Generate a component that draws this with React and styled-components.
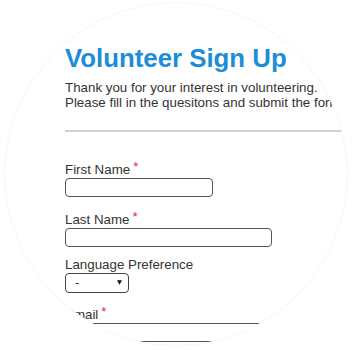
import React from 'react';
import styled, { createGlobalStyle } from 'styled-components';

const GlobalStyle = createGlobalStyle`
  html, body {
    margin: 0;
    padding: 0;
    background: #fff;
  }
  body {
    font-family: "Liberation Sans", Arial, sans-serif;
    color: #333;
  }
`;

const Page = styled.div`
  width: 352px;
  height: 350px;
  padding: 3px 0 0 5px;
  box-sizing: border-box;
`;

const Lens = styled.div`
  width: 342px;
  height: 342px;
  border-radius: 50%;
  overflow: hidden;
  background: #fff;
  box-shadow: 0 0 0 1px rgba(0, 0, 0, 0.025), 0 0 2px rgba(0, 0, 0, 0.04);
`;

const Form = styled.form`
  width: 340px;
  padding: 41px 0 0 60px;
  display: flex;
  flex-direction: column;
`;

const Title = styled.h1`
  margin: 0;
  font-size: 25.8px;
  font-weight: bold;
  line-height: normal;
  color: #1c8dd6;
`;

const Intro = styled.p`
  margin: 6.5px 0 0;
  font-size: 13.33px;
  line-height: normal;
  white-space: nowrap;
  color: #333;
`;

const Divider = styled.hr`
  margin: 20px 0 26px;
  width: 320px;
  height: 0;
  border: none;
  border-top: 2px solid #d2d2d2;
`;

const Field = styled.div`
  display: flex;
  flex-direction: column;
  align-items: flex-start;
  margin-bottom: 10px;
`;

const Label = styled.label`
  font-size: 13.33px;
  line-height: normal;
  color: #333;
  padding-top: ${(p) => (p.$required ? '4.5px' : '0')};
`;

const Req = styled.span`
  color: #e21b4f;
  margin-left: 3px;
  position: relative;
  top: -3px;
`;

const Input = styled.input`
  box-sizing: border-box;
  width: ${(p) => p.$width}px;
  height: 19px;
  margin: 1px 0 0;
  padding: 0 6px;
  border: 1px solid #555;
  border-radius: 4px;
  background: #fff;
  font: inherit;
  outline: none;
`;

const Select = styled.div`
  box-sizing: border-box;
  width: 64px;
  height: 20px;
  margin-top: 1px;
  padding: 0 6px 0 9px;
  display: flex;
  align-items: center;
  justify-content: space-between;
  border: 1px solid #444;
  border-radius: 4px;
  font-size: 13px;
  color: #333;
`;

function Arrow() {
  return (
    <svg width="5" height="5" viewBox="0 0 5 5">
      <polygon points="0,0.3 5,0.3 2.5,4.8" fill="#111" />
    </svg>
  );
}

export default function App() {
  return (
    <>
      <GlobalStyle />
      <Page>
        <Lens>
          <Form onSubmit={(e) => e.preventDefault()}>
            <Title>Volunteer Sign Up</Title>
            <Intro>
              Thank you for your interest in volunteering.
              <br />
              Please fill in the quesitons and submit the form.
            </Intro>
            <Divider />
            <Field>
              <Label $required>
                First Name<Req>*</Req>
              </Label>
              <Input $width={148} />
            </Field>
            <Field>
              <Label $required>
                Last Name<Req>*</Req>
              </Label>
              <Input $width={207} />
            </Field>
            <Field>
              <Label>Language Preference</Label>
              <Select>
                <span>-</span>
                <Arrow />
              </Select>
            </Field>
            <Field>
              <Label $required>
                Email<Req>*</Req>
              </Label>
              <Input $width={207} />
            </Field>
          </Form>
        </Lens>
      </Page>
    </>
  );
}
